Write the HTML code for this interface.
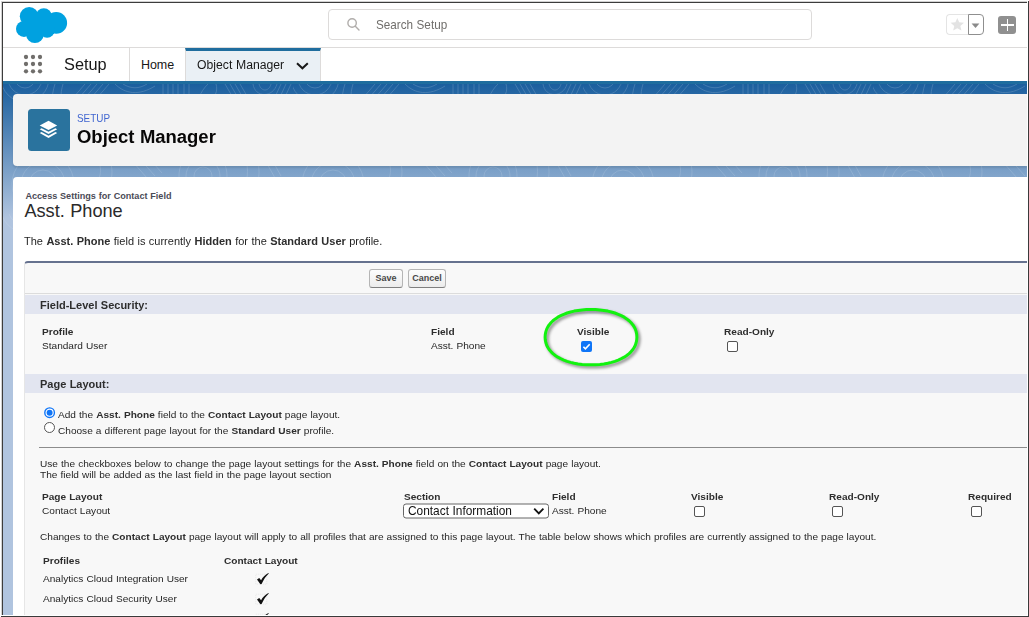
<!DOCTYPE html>
<html lang="en">
<head>
<meta charset="utf-8">
<title>Object Manager | Salesforce</title>
<style>
*{box-sizing:border-box;margin:0;padding:0}
html,body{width:1029px;height:617px;overflow:hidden;background:#fff}
body{font-family:"Liberation Sans",Arial,sans-serif;font-size:10.1px;color:#1f1f1f;position:relative}
.abs{position:absolute}
.t{position:absolute;white-space:nowrap;line-height:1;transform-origin:0 50%;word-spacing:.27px}
b{font-weight:bold;color:#2e2e2e}
#page{position:absolute;left:0;top:0;width:1029px;height:617px;overflow:hidden;background:#b0c4df}
#band{position:absolute;left:0;top:84px;width:1029px;height:533px;background:linear-gradient(to bottom,#1b5f9e 0,#b0c4df 134px,#b0c4df 100%)}
#ghead{position:absolute;left:0;top:0;width:1029px;height:48px;background:#fff;border-bottom:1px solid #dddbda}
#search{position:absolute;left:328px;top:9px;width:483.5px;height:30.5px;border:1px solid #dddbda;border-radius:4px;background:#fff}
#nav{position:absolute;left:0;top:48px;width:1029px;height:36px;background:#fff;border-bottom:3px solid #1f6d9e}
#tab{position:absolute;left:185px;top:48px;width:136px;height:33px;background:#eaf0f5;border-top:3px solid #1f6d9e;border-left:1px solid #dddbda;border-right:1px solid #dddbda}
#phead{position:absolute;left:13px;top:94px;width:1030px;height:72px;background:#f3f3f3;border-radius:4px;box-shadow:0 2px 2px rgba(0,0,0,.10)}
#card{position:absolute;left:13px;top:177px;width:1030px;height:460px;background:#fff;border-radius:4px 4px 0 0}
#block{position:absolute;left:24px;top:261px;width:1020px;height:400px;background:#f8f8f8;border-left:1px solid #e6e6e6;border-top:2.5px solid #66728f;border-radius:4px 0 0 0}
.sec{position:absolute;left:25px;width:1010px;background:#e2e5f0}
.btn{position:absolute;height:18.5px;top:269.3px;border:1px solid #b5b5b5;border-bottom-color:#7f7f7f;border-radius:3px;background:linear-gradient(#fdfdfd,#ececec);font-size:9px;font-weight:bold;color:#484848;text-align:center;line-height:16px}
.cb{position:absolute;width:11px;height:11px;border:1px solid #555;border-radius:2px;background:#fff}
.rd{position:absolute;width:11px;height:11px;border:1px solid #555;border-radius:50%;background:#fff}
</style>
</head>
<body>
<div id="page">
<div id="band"></div>
<svg class="abs" style="left:3px;top:84px" width="1025" height="200" viewBox="0 0 1025 200"><defs>
<pattern id="topo" width="290" height="130" patternUnits="userSpaceOnUse"><g fill="none" stroke="#fff" stroke-width=".8">
<circle cx="22" cy="-6" r="10"/><circle cx="22" cy="-6" r="17"/><circle cx="22" cy="-6" r="24"/>
<path d="M52 0c-4 12-4 24 2 40M60 0c-3 10-3 20 1 30"/>
<path d="M70 14l12-14M76 14l12-14M82 14l12-14M88 14l12-14M94 14l12-14"/>
<path d="M112 0c10 10 24 12 40 2M120 0c8 5 16 5 24 0"/>
<path d="M160 0v12M165 0v14M170 0v12M175 0v14M181 0v10M186 0v12"/>
<path d="M196 14c2-6 5-10 9-14M203 14c10 2 12-8 10-14"/>
<path d="M222 0l7 12M227 0l7 12M232 0l7 12M237 0l7 12"/>
<path d="M250 0c2 14 20 14 24 0M256 0c2 8 10 8 12 0"/>
<path d="M278 0l-6 13M283 0l-6 13M288 0l-6 13"/>
<circle cx="40" cy="100" r="14"/><circle cx="40" cy="100" r="22"/><circle cx="40" cy="100" r="31"/>
<path d="M90 70c10 8 10 24 0 34M100 66c12 12 12 32 0 44M130 78l14 16M136 74l16 18M143 71l16 18"/>
<circle cx="200" cy="92" r="9"/><circle cx="200" cy="92" r="17"/><path d="M176 92c0-34 48-34 48 0s-48 34-48 0"/>
<path d="M240 70c6 10 6 24 0 36M250 66c8 14 8 30 0 44M262 76l10 18M268 74l10 18"/>
</g></pattern>
<linearGradient id="pf" x1="0" y1="0" x2="0" y2="1"><stop offset="0" stop-color="#fff" stop-opacity=".2"/><stop offset=".55" stop-color="#fff" stop-opacity=".16"/><stop offset="1" stop-color="#fff" stop-opacity=".08"/></linearGradient>
<mask id="pm"><rect width="1025" height="200" fill="url(#pf)"/></mask></defs>
<rect width="1025" height="200" fill="url(#topo)" mask="url(#pm)"/></svg>
<div id="ghead"></div>
<svg class="abs" style="left:10px;top:4px" width="70" height="42" viewBox="10 4 70 42"><g fill="#00a1e0">
<circle cx="29.2" cy="16.3" r="9.4"/><circle cx="43.8" cy="16.2" r="8"/><circle cx="56.2" cy="22.9" r="10.9"/>
<circle cx="24" cy="28.9" r="8"/><circle cx="34.9" cy="34.2" r="8.8"/><circle cx="47.1" cy="30.2" r="7.6"/>
<rect x="26" y="14" width="28" height="20"/></g></svg>
<div id="search"></div>
<svg class="abs" style="left:344px;top:16px" width="20" height="18" viewBox="344 16 20 18"><g fill="none" stroke="#b0adab" stroke-width="1.4" stroke-linecap="round">
<circle cx="352.1" cy="23" r="4.2"/><path d="M355.3 26.2 L359 30"/></g></svg>
<div class="t" style="left:376.00px;top:18px;font-size:13px;color:#706e6b;transform:scaleX(0.9);">Search Setup</div>
<div class="abs" style="left:946px;top:14px;width:23px;height:21px;border:1px solid #e4e4e4;border-right:none;border-radius:4px 0 0 4px;background:#fff"></div>
<div class="abs" style="left:968px;top:14px;width:16px;height:21px;border:1px solid #8f8f8f;border-radius:0 4px 4px 0;background:#fff"></div>
<svg class="abs" style="left:949.8px;top:17.2px" width="14.6" height="14.6" viewBox="0 0 24 24"><path fill="#e3e3e3" d="M12 1.5l3.1 7.3 7.9.7-6 5.2 1.8 7.7L12 18.3l-6.8 4.1L7 14.7l-6-5.2 7.9-.7z"/></svg>
<svg class="abs" style="left:971px;top:23px" width="9" height="6" viewBox="0 0 9 6"><path fill="#8a8a8a" d="M0.6 0.6h7.8L4.5 5z"/></svg>
<div class="abs" style="left:998px;top:16px;width:18px;height:18px;border-radius:3px;background:#909090"></div>
<div class="abs" style="left:1001px;top:24.3px;width:13px;height:1.5px;background:#fff"></div>
<div class="abs" style="left:1006.7px;top:19.3px;width:1.5px;height:11.8px;background:#fff"></div>
<div id="nav"></div>
<svg class="abs" style="left:20px;top:52px" width="26" height="26" viewBox="20 52 26 26"><g fill="#706e6b"><circle cx="26" cy="57" r="2.15"/><circle cx="33" cy="57" r="2.15"/><circle cx="40" cy="57" r="2.15"/><circle cx="26" cy="64" r="2.15"/><circle cx="33" cy="64" r="2.15"/><circle cx="40" cy="64" r="2.15"/><circle cx="26" cy="71.3" r="2.15"/><circle cx="33" cy="71.3" r="2.15"/><circle cx="40" cy="71.3" r="2.15"/></g></svg>
<div class="t" style="left:63.60px;top:56px;font-size:17px;color:#181818;transform:scaleX(0.96);">Setup</div>
<div class="abs" style="left:129px;top:48px;width:1px;height:33px;background:#dddbda"></div>
<div class="t" style="left:140.90px;top:59px;font-size:12.5px;color:#181818;">Home</div>
<div id="tab"></div>
<div class="t" style="left:196.70px;top:59px;font-size:12.5px;color:#181818;transform:scaleX(0.977);">Object Manager</div>
<svg class="abs" style="left:294px;top:60px" width="16" height="12" viewBox="294 60 16 12"><path fill="none" stroke="#181818" stroke-width="2" d="M297 63.3l5.4 5 5.4-5"/></svg>
<div id="phead"></div>
<div class="abs" style="left:28px;top:109px;width:42px;height:42px;border-radius:3.5px;background:#2a739e"></div>
<svg class="abs" style="left:28px;top:109px" width="42" height="42" viewBox="28 109 42 42"><g fill="#fff">
<path d="M39.7 125.4L48.5 120.8 57.2 125.4 48.5 130z"/>
<path d="M39.7 129.2l1.9-1 6.9 3.6 6.9-3.6 1.8 1-8.7 4.8z"/>
<path d="M39.7 133.1l1.9-1 6.9 3.6 6.9-3.6 1.8 1-8.7 4.8z"/></g></svg>
<div class="t" style="left:77.00px;top:113px;font-size:11px;color:#4166d0;transform:scaleX(0.9);">SETUP</div>
<div class="t" style="left:77.00px;top:128px;font-size:18px;font-weight:bold;color:#080707;transform:scaleX(1.026);">Object Manager</div>
<div id="card"></div>
<div class="t" style="left:25.40px;top:192px;font-size:9.1px;font-weight:bold;color:#4a4a56;">Access Settings for Contact Field</div>
<div class="t" style="left:24.40px;top:202px;font-size:18.2px;color:#2a2a2a;">Asst. Phone</div>
<div class="t" style="left:24.40px;top:236px;font-size:10.5px;transform:scaleX(1.048);word-spacing:.36px">The <b>Asst. Phone</b> field is currently <b>Hidden</b> for the <b>Standard User</b> profile.</div>
<div id="block"></div>
<div class="abs" style="left:25px;top:293px;width:1010px;height:1px;background:#dcdcdc"></div>
<div class="btn" style="left:369.2px;width:33.5px">Save</div>
<div class="btn" style="left:408.2px;width:37.5px">Cancel</div>
<div class="sec" style="top:294.5px;height:19.5px"></div>
<div class="t" style="left:40.20px;top:300px;font-size:10.5px;font-weight:bold;color:#2e2e2e;transform:scaleX(1.048);">Field-Level Security:</div>
<div class="sec" style="top:374px;height:19px"></div>
<div class="t" style="left:40.20px;top:379px;font-size:10.5px;font-weight:bold;color:#2e2e2e;transform:scaleX(1.048);">Page Layout:</div>
<div class="t" style="left:41.50px;top:327px;font-size:9.8px;font-weight:bold;color:#2e2e2e;transform:scaleX(1.03);">Profile</div>
<div class="t" style="left:41.50px;top:341px;font-size:9.8px;transform:scaleX(1.03);">Standard User</div>
<div class="t" style="left:430.50px;top:327px;font-size:9.8px;font-weight:bold;color:#2e2e2e;transform:scaleX(1.03);">Field</div>
<div class="t" style="left:430.50px;top:341px;font-size:9.8px;transform:scaleX(1.03);">Asst. Phone</div>
<div class="t" style="left:577.20px;top:327px;font-size:9.8px;font-weight:bold;color:#2e2e2e;transform:scaleX(1.03);">Visible</div>
<div class="t" style="left:723.60px;top:327px;font-size:9.8px;font-weight:bold;color:#2e2e2e;transform:scaleX(1.03);">Read-Only</div>
<svg class="abs" style="left:581px;top:341px" width="11" height="11" viewBox="0 0 11 11"><rect width="11" height="11" rx="2" fill="#0f75f7"/><path d="M2.4 5.7l2 2.1 4.3-4.6" fill="none" stroke="#fff" stroke-width="1.6"/></svg>
<div class="cb" style="left:727px;top:341px"></div>
<svg class="abs" style="left:535px;top:300px" width="115" height="78" viewBox="535 300 115 78"><path d="M636.9 337.2L636.7 340.0L636.2 342.5L635.4 345.0L634.3 347.3L632.9 349.5L631.1 351.6L629.1 353.6L626.7 355.5L624.2 357.2L621.3 358.7L618.2 360.1L614.9 361.4L611.4 362.4L607.8 363.3L603.9 364.0L599.9 364.5L595.6 364.8L591.0 364.8L586.4 364.8L582.1 364.5L578.1 364.0L574.2 363.3L570.6 362.4L567.1 361.4L563.8 360.1L560.7 358.7L557.8 357.2L555.3 355.5L552.9 353.6L550.9 351.6L549.1 349.5L547.7 347.3L546.6 345.0L545.8 342.5L545.3 340.0L545.1 337.2L545.3 334.4L545.8 331.9L546.6 329.4L547.7 327.1L549.1 324.9L550.9 322.8L552.9 320.8L555.3 318.9L557.8 317.2L560.7 315.7L563.8 314.3L567.1 313.0L570.6 312.0L574.2 311.1L578.1 310.4L582.1 309.9L586.4 309.6L591.0 309.6L595.6 309.6L599.9 309.9L603.9 310.4L607.8 311.1L611.4 312.0L614.9 313.0L618.2 314.3L621.3 315.7L624.2 317.2L626.7 318.9L629.1 320.8L631.1 322.8L632.9 324.9L634.3 327.1L635.4 329.4L636.2 331.9L636.7 334.4z" fill="none" stroke="#12f20f" stroke-width="3" stroke-linejoin="round" style="filter:drop-shadow(2px 2px 1.7px rgba(0,0,0,.45))"/></svg>
<svg class="abs" style="left:44px;top:407px" width="12" height="12" viewBox="0 0 12 12"><circle cx="5.6" cy="5.7" r="4.8" fill="#fff" stroke="#0f75f7" stroke-width="1.4"/><circle cx="5.6" cy="5.7" r="3" fill="#0f75f7"/></svg>
<div class="rd" style="left:44.1px;top:422.3px"></div>
<div class="t" style="left:57.70px;top:410px;font-size:9.8px;transform:scaleX(1.03);">Add the <b>Asst. Phone</b> field to the <b>Contact Layout</b> page layout.</div>
<div class="t" style="left:57.70px;top:426px;font-size:9.8px;transform:scaleX(1.03);">Choose a different page layout for the <b>Standard User</b> profile.</div>
<div class="abs" style="left:39px;top:446.5px;width:1000px;height:1px;background:#8c8c8c"></div>
<div class="t" style="left:39.80px;top:459px;font-size:9.8px;transform:scaleX(1.03);">Use the checkboxes below to change the page layout settings for the <b>Asst. Phone</b> field on the <b>Contact Layout</b> page layout.</div>
<div class="t" style="left:39.80px;top:470px;font-size:9.8px;transform:scaleX(1.03);">The field will be added as the last field in the page layout section</div>
<div class="t" style="left:41.70px;top:492px;font-size:9.8px;font-weight:bold;color:#2e2e2e;transform:scaleX(1.03);">Page Layout</div>
<div class="t" style="left:41.70px;top:506px;font-size:9.8px;transform:scaleX(1.03);">Contact Layout</div>
<div class="t" style="left:404.40px;top:492px;font-size:9.8px;font-weight:bold;color:#2e2e2e;transform:scaleX(1.03);">Section</div>
<svg class="abs" style="left:400px;top:500px" width="152" height="22" viewBox="400 500 152 22"><rect x="403.5" y="504" width="145" height="14" rx="2.5" fill="#fff" stroke="#666" stroke-width="1"/></svg>
<div class="t" style="left:407.50px;top:505px;font-size:12.2px;color:#111;transform:scaleX(0.975);">Contact Information</div>
<svg class="abs" style="left:531px;top:505px" width="16" height="12" viewBox="531 505 16 12"><path fill="none" stroke="#111" stroke-width="1.8" d="M534.2 508.6l4.6 4.8 4.6-4.8"/></svg>
<div class="t" style="left:552.40px;top:492px;font-size:9.8px;font-weight:bold;color:#2e2e2e;transform:scaleX(1.03);">Field</div>
<div class="t" style="left:552.40px;top:506px;font-size:9.8px;transform:scaleX(1.03);">Asst. Phone</div>
<div class="t" style="left:690.90px;top:492px;font-size:9.8px;font-weight:bold;color:#2e2e2e;transform:scaleX(1.03);">Visible</div>
<div class="t" style="left:828.60px;top:492px;font-size:9.8px;font-weight:bold;color:#2e2e2e;transform:scaleX(1.03);">Read-Only</div>
<div class="t" style="left:967.70px;top:492px;font-size:9.8px;font-weight:bold;color:#2e2e2e;transform:scaleX(1.03);">Required</div>
<div class="cb" style="left:694.2px;top:506.3px"></div>
<div class="cb" style="left:832px;top:506.3px"></div>
<div class="cb" style="left:971px;top:506.3px"></div>
<div class="t" style="left:40.00px;top:532px;font-size:9.8px;transform:scaleX(1.03);">Changes to the <b>Contact Layout</b> page layout will apply to all profiles that are assigned to this page layout. The table below shows which profiles are currently assigned to the page layout.</div>
<div class="t" style="left:43.10px;top:556px;font-size:9.8px;font-weight:bold;color:#2e2e2e;transform:scaleX(1.03);">Profiles</div>
<div class="t" style="left:224.30px;top:556px;font-size:9.8px;font-weight:bold;color:#2e2e2e;transform:scaleX(1.03);">Contact Layout</div>
<div class="t" style="left:43.10px;top:574px;font-size:9.8px;transform:scaleX(1.03);">Analytics Cloud Integration User</div>
<div class="t" style="left:43.10px;top:594px;font-size:9.8px;transform:scaleX(1.03);">Analytics Cloud Security User</div>
<svg class="abs" style="left:256.8px;top:573.4px" width="12" height="11" viewBox="0 0 12 11" overflow="visible"><rect x="-1.2" y="1.2" width="11" height="10" fill="none" stroke="rgba(0,0,0,.07)" stroke-dasharray="1 1"/><path fill="#111" d="M0 6.4l2.2-1.5 1.9 2.3C5.7 4.3 8 1.9 11.4 0l.4.6C8.9 3.2 6.6 6.8 4.6 11.1L3.4 11.2z"/></svg>
<svg class="abs" style="left:256.8px;top:593.4px" width="12" height="11" viewBox="0 0 12 11" overflow="visible"><rect x="-1.2" y="1.2" width="11" height="10" fill="none" stroke="rgba(0,0,0,.07)" stroke-dasharray="1 1"/><path fill="#111" d="M0 6.4l2.2-1.5 1.9 2.3C5.7 4.3 8 1.9 11.4 0l.4.6C8.9 3.2 6.6 6.8 4.6 11.1L3.4 11.2z"/></svg>
<svg class="abs" style="left:256.8px;top:613.2px" width="12" height="11" viewBox="0 0 12 11" overflow="visible"><rect x="-1.2" y="1.2" width="11" height="10" fill="none" stroke="rgba(0,0,0,.07)" stroke-dasharray="1 1"/><path fill="#111" d="M0 6.4l2.2-1.5 1.9 2.3C5.7 4.3 8 1.9 11.4 0l.4.6C8.9 3.2 6.6 6.8 4.6 11.1L3.4 11.2z"/></svg>
</div>
<div class="abs" style="left:0px;top:0px;width:1029px;height:2px;background:#fff"></div>
<div class="abs" style="left:0px;top:0px;width:2px;height:617px;background:#fff"></div>
<div class="abs" style="left:1px;top:1px;width:1026px;height:1px;background:#d2d2d2"></div>
<div class="abs" style="left:1px;top:1px;width:1px;height:614px;background:#d2d2d2"></div>
<div class="abs" style="left:1027px;top:0px;width:1px;height:617px;background:#fff"></div>
<div class="abs" style="left:0px;top:615px;width:1029px;height:1px;background:#fff"></div>
<div class="abs" style="left:2px;top:2px;width:1025px;height:1px;background:#3c3c3c"></div>
<div class="abs" style="left:2px;top:2px;width:1px;height:613px;background:#3c3c3c"></div>
<div class="abs" style="left:1028px;top:1px;width:1px;height:616px;background:#3a3a3a"></div>
<div class="abs" style="left:1px;top:616px;width:1028px;height:1px;background:#3a3a3a"></div>
</body>
</html>
